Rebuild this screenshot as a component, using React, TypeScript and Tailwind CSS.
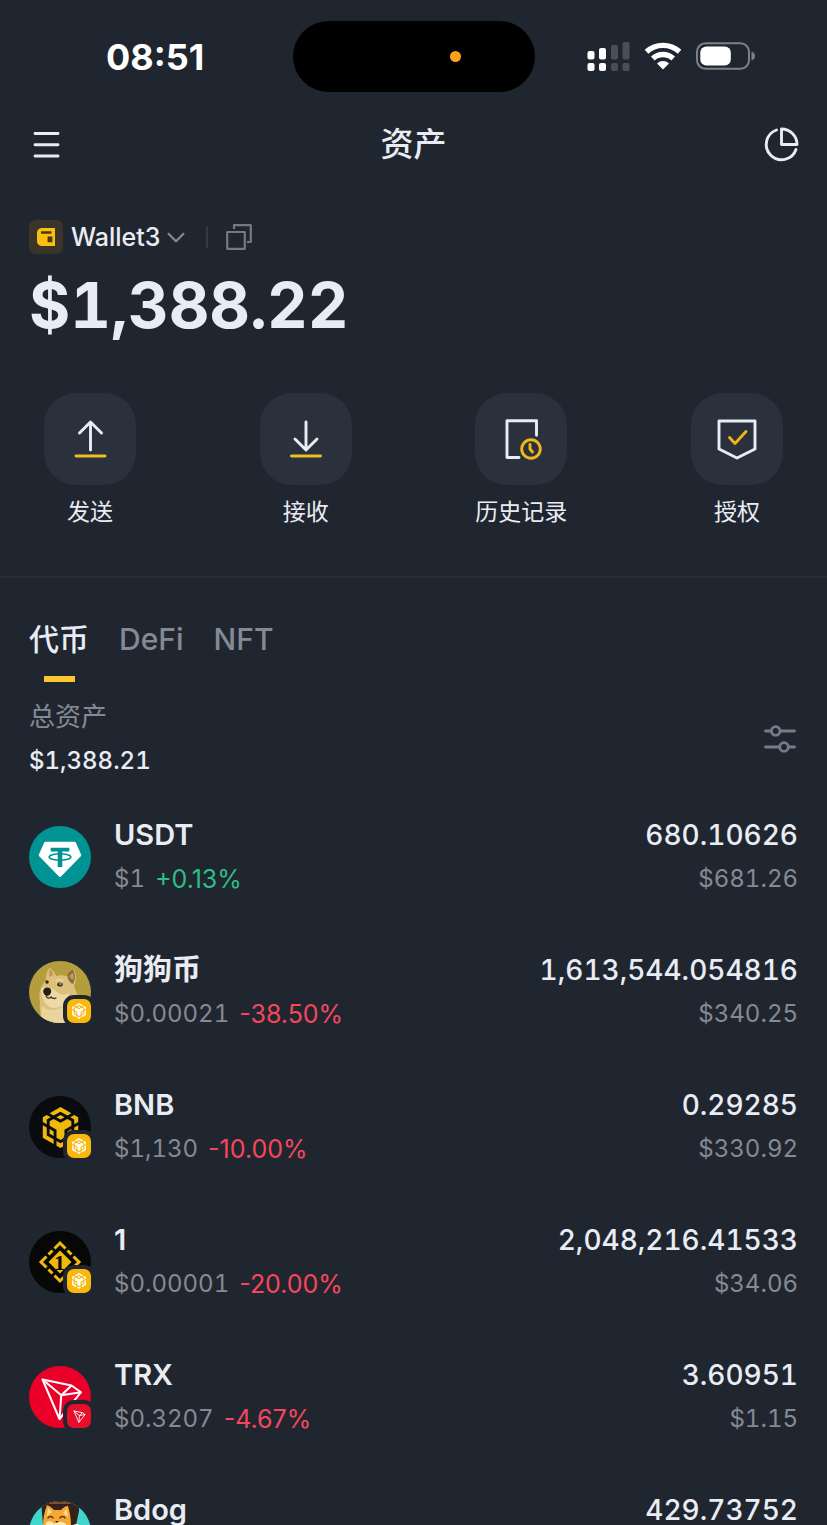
import React, { useState } from 'react';
import { SiBnbchain } from 'react-icons/si';

type Chain = 'bnb' | 'tron';

interface Token {
    name: string;
    price?: string;
    change?: string;
    amount: string;
    value?: string;
    icon: React.ReactNode;
    chain?: Chain;
}

const UsdtIcon = () => (
    <svg className="size-full" viewBox="0 0 62 62" fill="none">
        <circle cx="31" cy="31" r="31" fill="#009393" />
        <path d="M16.5 15.8h29q1 0 1.400 1l5.200 11.600q.5 1-.3 1.800L32 50.500q-1 1-2 0L10.200 30.200q-.8-.8-.3-1.800l5.200-11.600q.4-1 1.400-1z" fill="#fff" />
        <path d="M21.700 21.700h18.600v3.700h-7v15.500h-4.600V25.400h-7z" fill="#009393" />
        <ellipse cx="31" cy="31" rx="10.800" ry="3.300" stroke="#009393" strokeWidth="1.600" />
    </svg>
);

const DogeIcon = () => (
    <svg className="size-full" viewBox="0 0 62 62" fill="none">
        <defs>
            <clipPath id="doge-clip"><circle cx="31" cy="31" r="31" /></clipPath>
        </defs>
        <g clipPath="url(#doge-clip)">
            <rect width="62" height="62" fill="#b39d3c" />
            <path d="M11 62c2-8-1-13 0-21-2-9 1-17 6-22 0-6 1-10 4-12 3 2 5 5 6 8 4-1 7-1 10 0 3-4 5-6 8-6 3 5 2 11 0 16 3 8 7 15 9 37z" fill="#dcc07c" />
            <path d="M38 14c2-3 4-5 6-5 3 5 2 10 0 14-3-1-5-4-6-9z" fill="#8d6a3b" />
            <path d="M40 15c2-2 3-3 4-3 1 3 1 5 0 7-2-1-3-2-4-4z" fill="#c49a5d" />
            <path d="M20 16c0-3 0-6 1-8 2 2 3 4 3 6z" fill="#c29a55" />
            <path d="M12 28c5-4 11-1 16 3 4 4 9 3 12 1 0 10-6 14-14 15-7 0-13-5-14-19z" fill="#ecd9a6" />
            <path d="M13 45c6 6 17 5 24-2 5 5 7 11 8 19H11z" fill="#e8d49c" />
            <path d="M15 28c2-2 6-2 7 1 1 3-2 6-4 6-3-1-5-4-3-7z" fill="#2b1d18" />
            <path d="M17 35c1 2 3 3 5 1 2 2 3 2 5 1" stroke="#4e3220" strokeWidth="1.300" strokeLinecap="round" />
            <ellipse cx="18" cy="21" rx="1.800" ry="1.800" fill="#3a2516" />
            <ellipse cx="31" cy="23.500" rx="2.800" ry="2" fill="#4a3019" />
            <circle cx="31.500" cy="23" r=".8" fill="#fff" />
            <path d="M27 20c2-2 5-2 7 0" stroke="#eedcae" strokeWidth="1.300" />
        </g>
    </svg>
);

const BnbIcon = () => (
    <div className="flex size-full items-center justify-center rounded-full bg-[#090b0e] text-[#f0b90b]">
        <SiBnbchain className="size-[41px]" />
    </div>
);

const OneIcon = () => (
    <svg className="size-full" viewBox="0 0 62 62" fill="none">
        <circle cx="31" cy="31" r="31" fill="#070806" />
        <g stroke="#f0b90b" strokeWidth="3">
            <path d="M25.500 17.500l5.500-5.500 5.500 5.500M44.500 25.500L50 31l-5.500 5.500M36.500 44.500L31 50l-5.500-5.500M17.500 36.500L12 31l5.500-5.500" />
            <path d="M38.500 19.500l4 4M38.500 42.500l4-4M23.500 42.500l-4-4M23.500 19.500l-4 4" />
        </g>
        <path d="M31 19.500L42.500 31 31 42.500 19.500 31z" fill="#f0b90b" />
        <text x="30.500" y="38.500" textAnchor="middle" fontFamily="Liberation Serif, serif" fontWeight="700" fontSize="22" fill="#070806">1</text>
    </svg>
);

const TronMark: React.FC<{ className: string; strokeWidth: number }> = ({ className, strokeWidth }) => (
    <svg className={className} viewBox="0 0 62 62" fill="none" stroke="#fff" strokeWidth={strokeWidth} strokeLinejoin="round">
        <path d="M13.500 13.500l29 6 9.500 6.700-21.500 26.800z" />
        <path d="M13.500 13.500l18.800 15.700L30.500 53M32.300 29.200l10.200-9.700M32.300 29.200l19.700-3" />
    </svg>
);

const TrxIcon = () => (
    <div className="size-full rounded-full bg-[#eb0029]">
        <TronMark className="size-full" strokeWidth={2} />
    </div>
);

const BdogIcon = () => (
    <svg className="size-full" viewBox="0 0 62 62" fill="none">
        <defs>
            <clipPath id="bdog-clip"><circle cx="31" cy="31" r="31" /></clipPath>
        </defs>
        <g clipPath="url(#bdog-clip)">
            <rect width="62" height="62" fill="#40d5cd" />
            <path d="M12 0h38v10l-3 14H14z" fill="#35201b" />
            <path d="M20 2h22" stroke="#9a6220" strokeWidth="1.500" />
            <path d="M14 26c0-8 1-14 4-22 3 1 5 3 7 5h7c2-2 4-4 7-4 2 7 3 12 3 20l4 8-7 29H14z" fill="#f6a834" />
            <path d="M19 7l4 4-5 4zM38 8l-4 4 5 4z" fill="#ffd992" />
            <path d="M17 22c3-3 6-2 8 1 4-3 8-3 12 0l3 9H15z" fill="#ffe9b5" />
            <path d="M19 17c1-2 4-2 5 0M31 17c1-2 4-2 5 0" stroke="#5f3212" strokeWidth="1.500" strokeLinecap="round" />
            <path d="M26 20h4l-2 2z" fill="#4a2513" />
            <path d="M44 24c4-2 7-1 8 3l-4 6-6-1z" fill="#fff3d2" />
        </g>
    </svg>
);

const ChainBadge: React.FC<{ chain: Chain }> = ({ chain }) => (
    <span className={`absolute -right-1 -bottom-1 flex size-8 items-center justify-center rounded-[11px] border-4 border-[#20262f] ${chain === 'bnb' ? 'bg-[#f9b80b]' : 'bg-[#e50e2b]'}`}>
        {chain === 'bnb' ? <SiBnbchain className="size-4 text-white" /> : <TronMark className="size-[18px]" strokeWidth={3} />}
    </span>
);

const TOKENS: Token[] = [
    { name: 'USDT', price: '$1', change: '+0.13%', amount: '680.10626', value: '$681.26', icon: <UsdtIcon /> },
    { name: '狗狗币', price: '$0.00021', change: '-38.50%', amount: '1,613,544.054816', value: '$340.25', icon: <DogeIcon />, chain: 'bnb' },
    { name: 'BNB', price: '$1,130', change: '-10.00%', amount: '0.29285', value: '$330.92', icon: <BnbIcon />, chain: 'bnb' },
    { name: '1', price: '$0.00001', change: '-20.00%', amount: '2,048,216.41533', value: '$34.06', icon: <OneIcon />, chain: 'bnb' },
    { name: 'TRX', price: '$0.3207', change: '-4.67%', amount: '3.60951', value: '$1.15', icon: <TrxIcon />, chain: 'tron' },
    { name: 'Bdog', amount: '429.73752', icon: <BdogIcon />, chain: 'bnb' },
];

const ACTIONS = [
    {
        label: '发送',
        icon: <><path d="M20.500 31V4M9.500 14l11-11 11 11" /><path d="M6 37h29" stroke="#edbd22" /></>,
    },
    {
        label: '接收',
        icon: <><path d="M20 3v27M9 20l11 11 11-11" /><path d="M5.500 37h29" stroke="#edbd22" /></>,
    },
    {
        label: '历史记录',
        icon: (
            <>
                <path d="M18 38.500H6V1.700h29.500v14.500" />
                <circle cx="30" cy="30" r="9.300" stroke="#edb91c" />
                <path d="M29 25.500v4.500l2.500 3" stroke="#edb91c" />
            </>
        ),
    },
    {
        label: '授权',
        icon: <><path d="M2 2h36v28l-18 9-18-9z" /><path d="M12.500 18.500l5.500 6L29 12.500" stroke="#f0b31c" /></>,
    },
];

const StatusBar = () => (
    <div className="grid h-[113px] shrink-0 grid-cols-[1fr_242px_1fr] items-center">
        <time className="ml-[106px] text-[36px] leading-none font-bold text-white">08:51</time>
        <div className="flex h-[71px] items-center rounded-full bg-black pl-[157px]">
            <span className="size-[11px] rounded-full bg-[#ff9f1c]" />
        </div>
        <div className="mb-0.5 ml-[52px] flex items-center">
            <svg className="h-[30px] w-[43px]" viewBox="0 0 43 30">
                <g fill="#fff">
                    <rect x="0.500" y="10" width="7" height="8.500" rx="2" />
                    <rect x="12" y="7" width="7" height="11.500" rx="2" />
                    <rect x="0.500" y="22" width="7" height="8" rx="2" />
                    <rect x="12" y="22" width="7" height="8" rx="2" />
                </g>
                <g fill="#4a4e57">
                    <rect x="24" y="4" width="7" height="14.500" rx="2" />
                    <rect x="35.500" y="1" width="7" height="17.500" rx="2" />
                    <rect x="24" y="22" width="7" height="8" rx="2" />
                    <rect x="35.500" y="22" width="7" height="8" rx="2" />
                </g>
            </svg>
            <svg className="ml-3.5 h-[28px] w-[38px]" viewBox="0 0 38 28" fill="none" stroke="#fff" strokeWidth="5.400">
                <path d="M2.500 9.800a24.500 24.500 0 0 1 33 0M8.800 16.500a15 15 0 0 1 20.400 0" />
                <path d="M19 27.500l-6-6a8.700 8.700 0 0 1 12 0z" fill="#fff" stroke="none" />
            </svg>
            <svg className="ml-3.5 h-[28px] w-[60px]" viewBox="0 0 60 28">
                <rect x="1" y="1.300" width="52" height="25.400" rx="8.500" fill="none" stroke="#7d8087" strokeWidth="2" />
                <rect x="4.300" y="4.500" width="30.500" height="19" rx="6" fill="#fff" />
                <path d="M55.500 9.500q3.500 1.500 3.500 4.500t-3.500 4.500z" fill="#7d8087" />
            </svg>
        </div>
    </div>
);

const TokenRow: React.FC<{ token: Token }> = ({ token }) => (
    <li className="flex items-center">
        <div className="relative size-[62px] shrink-0">
            {token.icon}
            {token.chain && <ChainBadge chain={token.chain} />}
        </div>
        <div className="ml-[23px] flex-1">
            <div className="text-[29px] leading-[44px] font-semibold">{token.name}</div>
            <div className="flex h-11 gap-2.5 text-[#848a94]">
                <span className="text-[24px] leading-[44px] tabular-nums">{token.price}</span>
                {token.change && (
                    <span className={`text-[25px] leading-[44px] ${token.change.startsWith('+') ? 'text-[#2ebd85]' : 'text-[#f6465d]'}`}>{token.change}</span>
                )}
            </div>
        </div>
        <div className="text-right tabular-nums">
            <div className="text-[28px] leading-[44px] font-medium">{token.amount}</div>
            <div className="h-11 text-[24px] leading-[44px] text-[#848a94]">{token.value}</div>
        </div>
    </li>
);

const App: React.FC = () => {
    const [tab, setTab] = useState('代币');

    return (
        <div className="flex h-screen flex-col overflow-hidden bg-[#20262f] font-['Inter','Noto_Sans_CJK_SC',sans-serif] text-[#eaecf4]">
            <StatusBar />

            <header className="flex h-[62px] shrink-0 items-center justify-between px-[29px]">
                <button type="button" aria-label="Menu">
                    <svg className="size-[34px]" viewBox="0 0 34 34" stroke="currentColor" strokeWidth="2.900" strokeLinecap="round">
                        <path d="M6 6.500h23M6 17.800h23M6 29h23" />
                    </svg>
                </button>
                <h1 className="text-[33px] leading-[48px] font-medium">资产</h1>
                <button type="button" aria-label="Portfolio">
                    <svg className="size-[34px] overflow-visible" viewBox="0 0 34 34" fill="none" stroke="currentColor" strokeWidth="2.900" strokeLinecap="round" strokeLinejoin="round">
                        <path d="M17.500 2v15.500H33A15.500 15.500 0 0 0 17.500 2z" />
                        <path d="M12.500 3A15.300 15.300 0 1 0 32 22.500" />
                    </svg>
                </button>
            </header>

            <section className="mt-11 px-[29px] tabular-nums">
                <div className="flex h-9 items-center">
                    <button type="button" className="flex items-center">
                        <span className="flex size-[34px] items-center justify-center rounded-[7px] bg-[#3a3528]">
                            <svg className="size-[18px]" viewBox="0 0 18 18">
                                <path d="M4 0h14v18H4q-4-1-4-5V5q0-4 4-5z" fill="#fcbf10" />
                                <path d="M4 4.500h10.500M11.800 9.800h2.400v3.200h-2.400z" stroke="#4a3a12" strokeWidth="2.400" />
                            </svg>
                        </span>
                        <span className="ml-2 text-[25px] leading-9 font-medium">Wallet3</span>
                        <svg className="ml-1.5 h-[11px] w-[18px]" viewBox="0 0 18 11" fill="none" stroke="#848a94" strokeWidth="2.200">
                            <path d="M1 1.200l8 8 8-8" />
                        </svg>
                    </button>
                    <span className="ml-[21px] h-[22px] w-0.5 bg-[#343a44]" />
                    <button type="button" aria-label="Copy address" className="ml-[18px]">
                        <svg className="size-[26px]" viewBox="0 0 26 26" fill="none" stroke="#747a84" strokeWidth="2.200" strokeLinejoin="round">
                            <path d="M1.200 8h17.600v16.800H1.200zM8 5V1.200h16.800V18H21" />
                        </svg>
                    </button>
                </div>
                <div className="mt-2 text-[63px] leading-[84px] font-bold">$1,388.22</div>
            </section>

            <nav className="mt-[46px] flex justify-between px-11">
                {ACTIONS.map((action) => (
                    <button key={action.label} type="button" className="flex w-[92px] flex-col items-center">
                        <span className="flex size-[92px] items-center justify-center rounded-[32px] bg-[#2a303c]">
                            <svg className="size-10 overflow-visible" viewBox="0 0 40 40" fill="none" stroke="currentColor" strokeWidth="2.900" strokeLinecap="round" strokeLinejoin="round">
                                {action.icon}
                            </svg>
                        </span>
                        <span className="mt-2.5 text-[23px] leading-[34px] whitespace-nowrap">{action.label}</span>
                    </button>
                ))}
            </nav>

            <hr className="mt-[47px] border-t-2 border-[#292f39]" />

            <div role="tablist" className="mt-9 flex gap-[30px] px-[29px]">
                {['代币', 'DeFi', 'NFT'].map((name) => (
                    <button
                        key={name}
                        type="button"
                        role="tab"
                        aria-selected={tab === name}
                        onClick={() => setTab(name)}
                        className={`flex flex-col items-center text-[30px] leading-[50px] font-medium ${tab === name ? '' : 'text-[#848a94]'}`}
                    >
                        {name}
                        {tab === name && <span className="mt-3 h-1.5 w-[31px] bg-[#fcc62f]" />}
                    </button>
                ))}
            </div>

            <section className="mt-[13px] flex items-center justify-between px-[29px] tabular-nums">
                <div>
                    <div className="text-[26px] leading-[44px] text-[#848a94]">总资产</div>
                    <div className="text-[24px] leading-[44px] font-medium">$1,388.21</div>
                </div>
                <button type="button" aria-label="Filter" className="mr-0.5">
                    <svg className="size-8" viewBox="0 0 32 32" fill="none" stroke="#747d87" strokeWidth="2.800" strokeLinecap="round">
                        <path d="M1.500 8h5M17 8h13.500M1.500 24h13M25.500 24h5" />
                        <circle cx="11.700" cy="8" r="4.300" />
                        <circle cx="20" cy="24" r="4.300" />
                    </svg>
                </button>
            </section>

            <ul className="mt-[30px] flex min-h-0 flex-1 flex-col gap-[47px] overflow-y-auto px-[29px] [scrollbar-width:none]">
                {TOKENS.map((token) => (
                    <TokenRow key={token.name} token={token} />
                ))}
            </ul>
        </div>
    );
};

export default App;
